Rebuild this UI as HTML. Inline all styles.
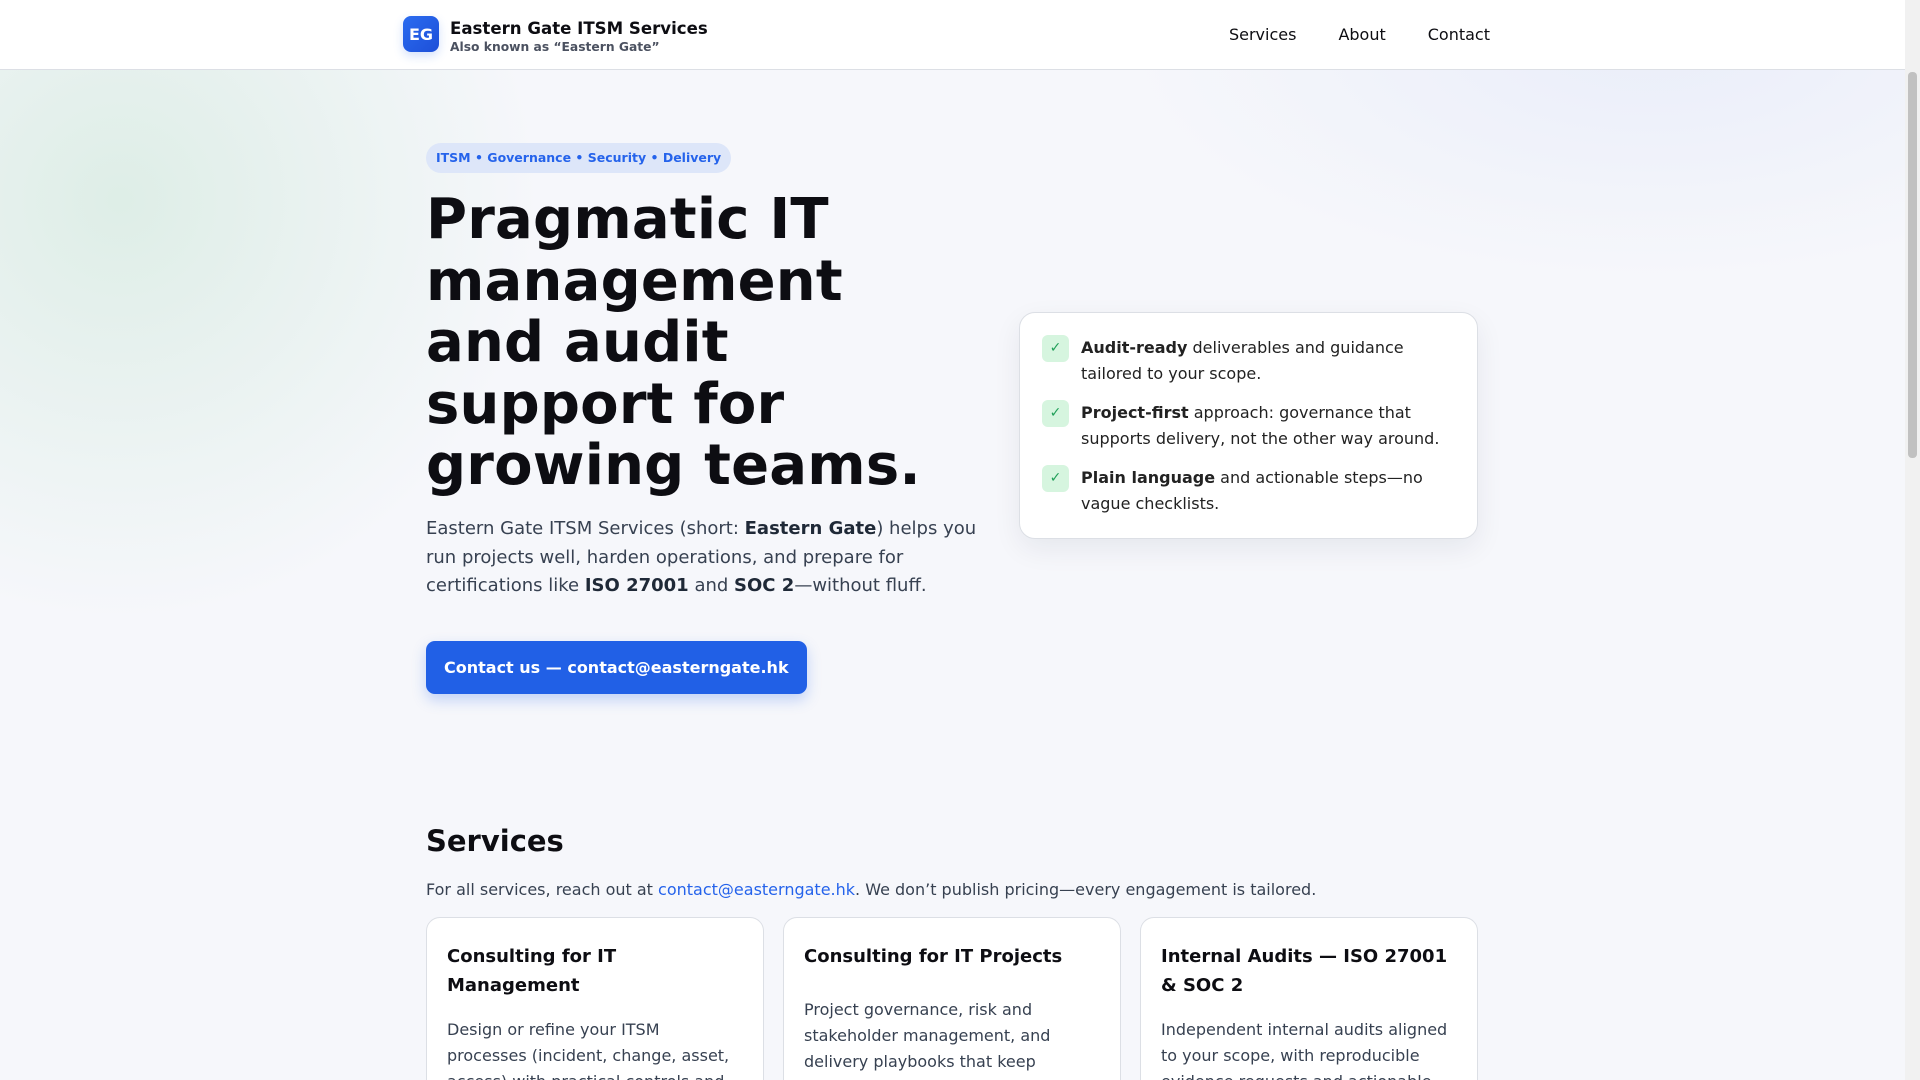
<!DOCTYPE html>
<html><head><meta charset="utf-8"><style>
*{box-sizing:border-box;margin:0;padding:0}
html,body{width:1920px;height:1080px;overflow:hidden}
body{font-family:"DejaVu Sans","Liberation Sans",sans-serif;color:#0d0d12;background:#f6f7fb;position:relative}
.bg{position:absolute;inset:0;background:radial-gradient(ellipse 560px 560px at 120px 200px,rgba(150,210,170,.25),transparent 75%),radial-gradient(ellipse 700px 320px at 1650px 40px,rgba(180,196,240,.18),transparent 75%)}
.main{position:absolute;left:0;top:0;width:1905px;height:1080px}
.sb{position:absolute;right:0;top:0;width:15px;height:1080px;background:#f1f1f1}
.sb i{position:absolute;left:3px;top:72px;width:9px;height:386px;background:#c1c1c1;border-radius:4px}
nav{position:absolute;top:0;left:0;width:1905px;height:70px;background:#fff;border-bottom:1px solid #dcdfe5}
.logo{position:absolute;left:403px;top:16px;width:36px;height:36px;border-radius:8px;background:linear-gradient(135deg,#2b6cf0,#1d4fd8);color:#fff;font-weight:bold;font-size:16px;display:flex;align-items:center;justify-content:center;box-shadow:0 4px 10px rgba(37,99,235,.2)}
.brand{position:absolute;left:450px;top:19px}
.brand b{display:block;font-size:16.6px;line-height:20px}
.brand s{text-decoration:none;display:block;font-size:12.3px;font-weight:bold;color:#4b5160;line-height:16px}
.links{position:absolute;right:415px;top:25px;font-size:16px;display:flex;gap:42px}
.wrap{position:absolute;left:426px;width:1052px}
.pill{display:inline-block;background:#dde6f9;color:#2563eb;font-size:12.5px;font-weight:bold;padding:0 10px;height:30px;line-height:30px;border-radius:15px}
h1{font-size:56px;line-height:61.6px;margin-top:16px;width:520px;letter-spacing:.2px}
.lead{font-size:18px;line-height:28.6px;color:#374151;margin-top:18px;width:560px}
.lead b{color:#1f2937}
.btn{display:inline-block;margin-top:40px;background:#2160e6;color:#fff;font-weight:bold;font-size:16px;height:53px;line-height:53px;padding:0 18px;border-radius:9px;box-shadow:0 6px 14px rgba(37,99,235,.25)}
.card{position:absolute;left:1019px;top:312px;width:459px;height:227px;background:#fff;border:1px solid #dcdfe5;border-radius:16px;box-shadow:0 10px 28px rgba(20,30,60,.07);padding:22px 22px}
.it{display:flex;gap:12px;font-size:16px;line-height:25.5px;color:#222;margin-bottom:14px}
.ck{flex:none;width:27px;height:27px;border-radius:6px;background:#d6f5df;color:#22a05a;font-size:14px;text-align:center;line-height:27px}
h2{font-size:29px;line-height:34px}
.sub{font-size:16px;color:#374151;margin-top:22px}
.sub a{color:#2563eb;text-decoration:none}
.cards{display:flex;gap:19px;margin-top:18px}
.sc{width:338px;height:300px;background:#fff;border:1px solid #dcdfe5;border-radius:14px;padding:24px 20px}
.sc h3{font-size:18px;line-height:29px}
.sc p{font-size:16px;line-height:26px;color:#374151;margin-top:17px}
.sc p.b{margin-top:26px}
</style></head><body>
<div class="main"><div class="bg"></div>
<nav><div class="logo">EG</div><div class="brand"><b>Eastern Gate ITSM Services</b><s>Also known as “Eastern Gate”</s></div>
<div class="links"><span>Services</span><span>About</span><span>Contact</span></div></nav>
<div class="wrap" style="top:143px">
<span class="pill">ITSM • Governance • Security • Delivery</span>
<h1>Pragmatic IT management and audit support for growing teams.</h1>
<p class="lead">Eastern Gate ITSM Services (short: <b>Eastern Gate</b>) helps you run projects well, harden operations, and prepare for certifications like <b>ISO 27001</b> and <b>SOC 2</b>—without fluff.</p>
<span class="btn">Contact us — contact@easterngate.hk</span>
</div>
<div class="card">
<div class="it"><span class="ck">✓</span><div><b>Audit-ready</b> deliverables and guidance tailored to your scope.</div></div>
<div class="it"><span class="ck">✓</span><div><b>Project-first</b> approach: governance that supports delivery, not the other way around.</div></div>
<div class="it"><span class="ck">✓</span><div><b>Plain language</b> and actionable steps—no vague checklists.</div></div>
</div>
<div class="wrap" style="top:824px">
<h2>Services</h2>
<p class="sub">For all services, reach out at <a>contact@easterngate.hk</a>. We don’t publish pricing—every engagement is tailored.</p>
<div class="cards">
<div class="sc"><h3>Consulting for IT Management</h3><p>Design or refine your ITSM processes (incident, change, asset, access) with practical controls and clear ownership.</p></div>
<div class="sc"><h3>Consulting for IT Projects</h3><p class="b">Project governance, risk and stakeholder management, and delivery playbooks that keep projects on track.</p></div>
<div class="sc"><h3>Internal Audits — ISO 27001 &amp; SOC 2</h3><p>Independent internal audits aligned to your scope, with reproducible evidence requests and actionable findings.</p></div>
</div></div>
</div>
<div class="sb"><i></i></div>
</body></html>
